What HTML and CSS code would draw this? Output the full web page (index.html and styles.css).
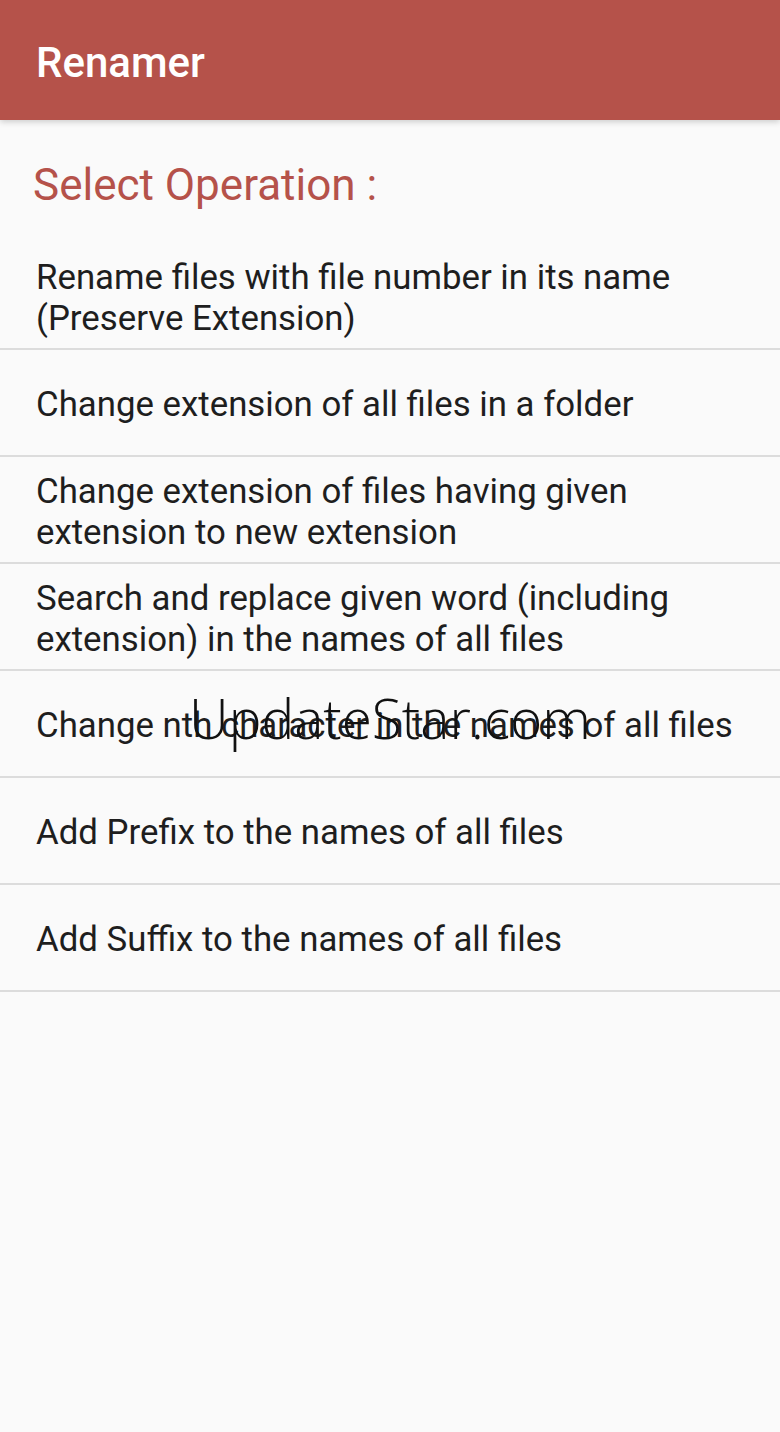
FILE: index.html
```html
<!DOCTYPE html>
<html>
<head>
<meta charset="utf-8">
<link rel="stylesheet" href="styles.css">
</head>
<body>
<header class="appbar"><h1 class="appbar-title">Renamer</h1></header>
<main class="content">
  <h2 class="section-title">Select Operation :</h2>
  <ul class="ops">
    <li class="op">Rename files with file number in its name (Preserve Extension)</li>
    <li class="op">Change extension of all files in a folder</li>
    <li class="op">Change extension of files having given extension to new extension</li>
    <li class="op">Search and replace given word (including extension) in the names of all files</li>
    <li class="op">Change nth character in the names of all files</li>
    <li class="op">Add Prefix to the names of all files</li>
    <li class="op">Add Suffix to the names of all files</li>
  </ul>
</main>
<div class="watermark">UpdateStar.com</div>
</body>
</html>
```

FILE: styles.css
```css
html, body {
  margin: 0;
  padding: 0;
  background: #fafafa;
  width: 780px;
  height: 1432px;
  overflow: hidden;
  font-family: Roboto, "Liberation Sans", sans-serif;
}
.appbar {
  box-sizing: border-box;
  height: 120px;
  background: #b5524a;
  display: flex;
  align-items: center;
  padding: 4px 36px 0;
  box-shadow: 0 2px 6px rgba(0,0,0,0.18);
  position: relative;
  z-index: 1;
}
.appbar-title {
  margin: 0;
  color: #ffffff;
  font-size: 42px;
  font-weight: 500;
}
.content {
  display: flex;
  flex-direction: column;
}
.section-title {
  box-sizing: border-box;
  margin: 0;
  height: 123px;
  display: flex;
  align-items: center;
  padding: 6px 0 0 33px;
  color: #b5524a;
  font-size: 44px;
  font-weight: 400;
}
.ops {
  list-style: none;
  margin: 0;
  padding: 0;
}
.op {
  box-sizing: border-box;
  height: 107px;
  display: flex;
  align-items: center;
  padding: 4px 36px 0;
  border-bottom: 2px solid #dcdcdc;
  font-size: 34.8px;
  line-height: 41px;
  color: #1e1e1e;
}
.watermark {
  position: absolute;
  left: 0;
  right: 0;
  top: 678px;
  text-align: center;
  font-family: "Open Sans", sans-serif;
  font-weight: 300;
  font-size: 55px;
  color: #111111;
  line-height: 80px;
}
```
